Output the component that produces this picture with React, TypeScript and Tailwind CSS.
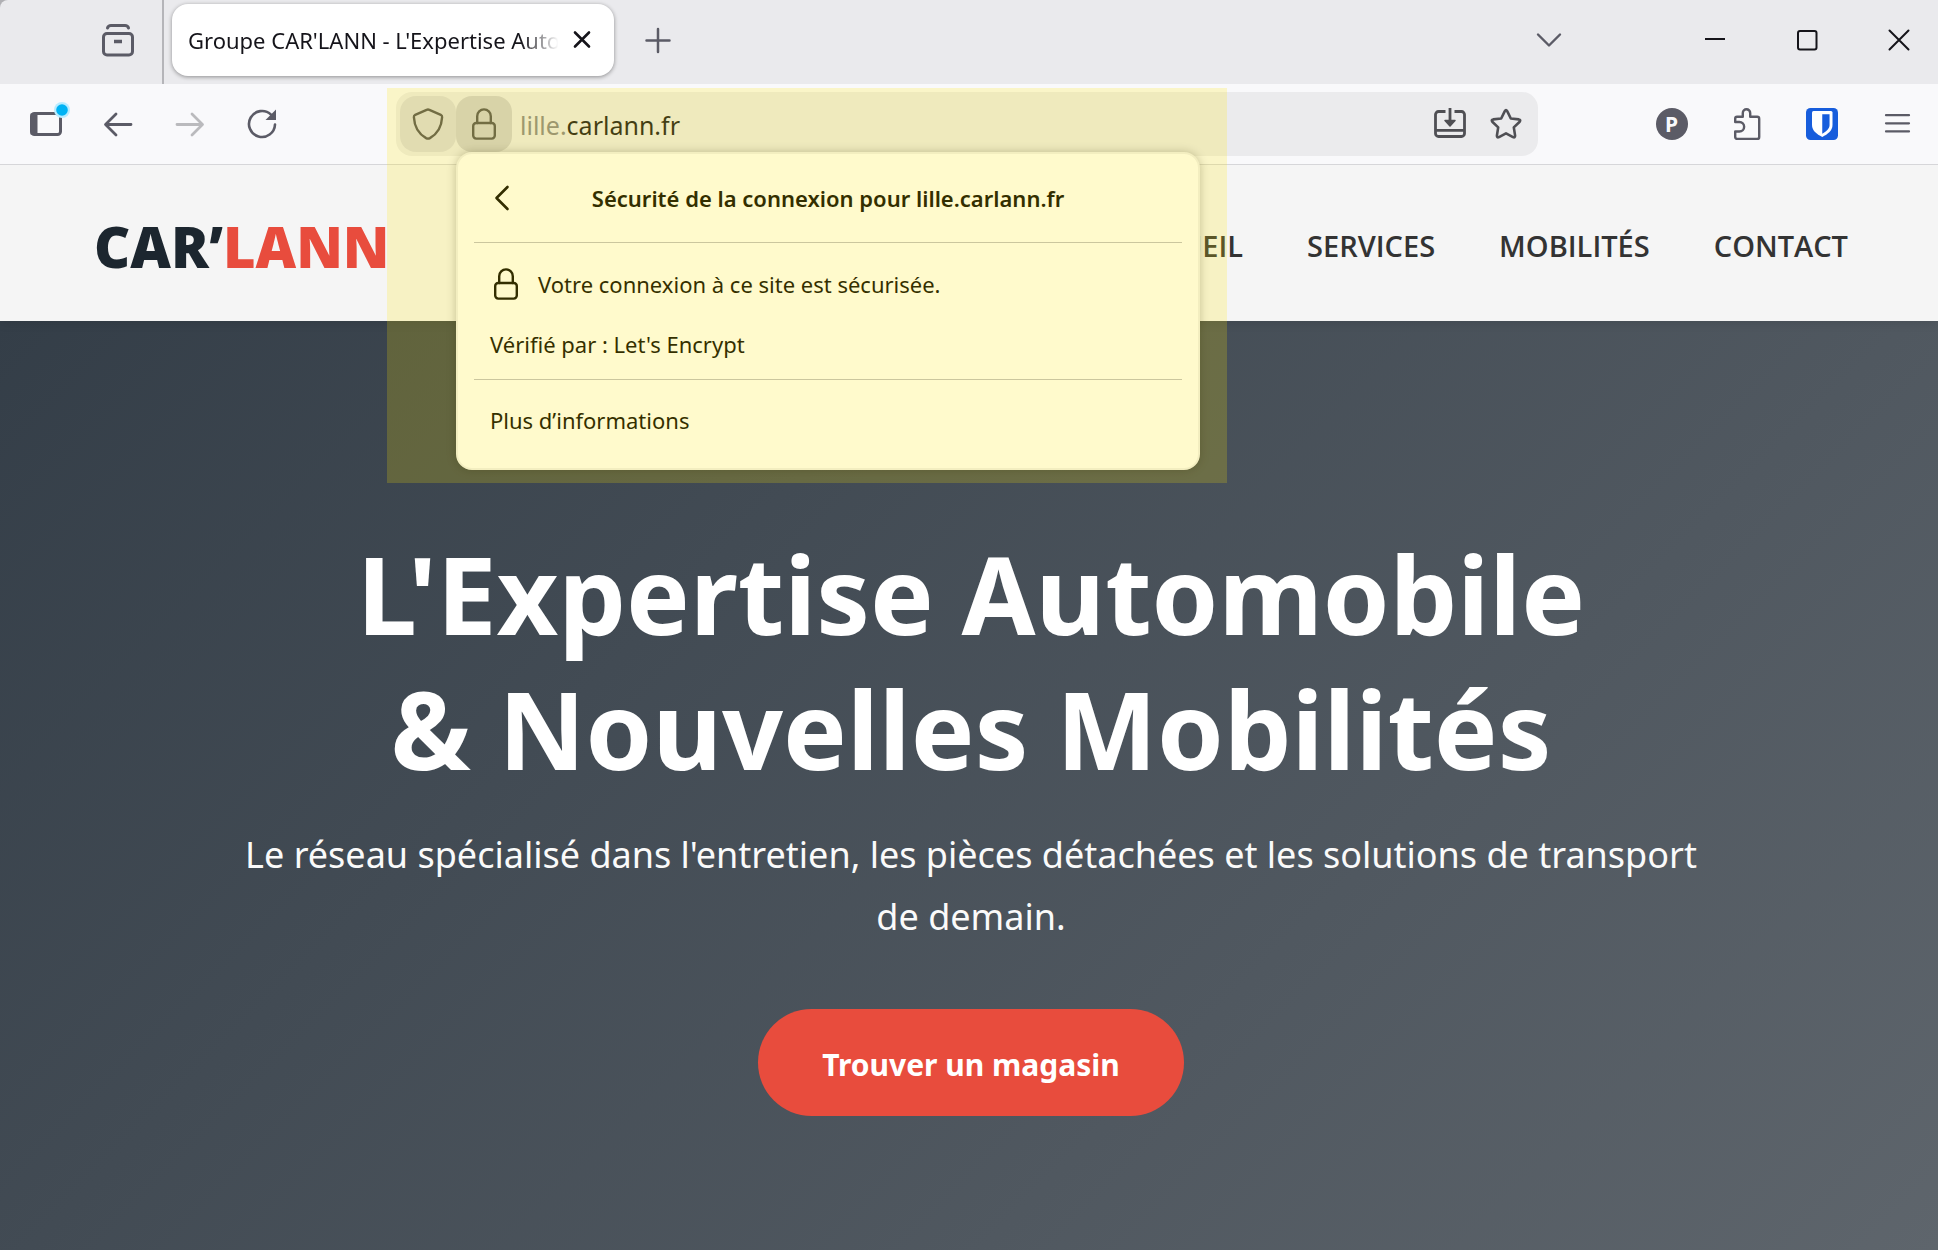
import type { ReactNode } from 'react';

type IconProps = { children: ReactNode; className?: string; width?: number };

function Icon({ children, className = '', width = 3 }: IconProps) {
  return (
    <svg
      viewBox="0 0 32 32"
      className={`size-8 shrink-0 overflow-visible ${className}`}
      fill="none"
      stroke="currentColor"
      strokeWidth={width}
      strokeLinecap="round"
      strokeLinejoin="round"
      aria-hidden="true"
    >
      {children}
    </svg>
  );
}

function LockIcon() {
  return (
    <Icon width={2.4}>
      <rect x="5.2" y="15" width="21.6" height="15.6" rx="3" />
      <path d="M9.2 15V8.200a6.800 6.800 0 0 1 13.600 0V15" />
    </Icon>
  );
}

function ToolButton({ label, className = '', children }: { label: string; className?: string; children: ReactNode }) {
  return (
    <button type="button" aria-label={label} className={`flex h-14 items-center justify-center ${className}`}>
      {children}
    </button>
  );
}

function TabStrip() {
  return (
    <div className="flex h-21 items-stretch rounded-tl-lg bg-[#eaeaed] text-[#5b5b66]">
      <div className="flex w-[164px] items-center justify-end border-r-2 border-[#b5b5b9] pr-[10px] pb-1">
        <ToolButton label="Liste des onglets" className="w-[68px]">
          <Icon>
            <rect x="1.500" y="9.500" width="29" height="21.500" rx="3.500" />
            <path d="M5.500 4c.5-1.700 1.500-2.500 3.500-2.500h14c2 0 3 .8 3.500 2.500" />
            <path d="M12 17.500h8" strokeLinecap="butt" strokeWidth="3.500" />
          </Icon>
        </ToolButton>
      </div>
      <div className="my-auto mb-2 ml-2 flex h-18 w-[442px] items-center rounded-2xl bg-white px-4 text-[#15141a] shadow-[0_1px_4px_rgba(0,0,0,0.4)]">
        <span className="flex-1 overflow-hidden text-[22px] whitespace-nowrap [mask-image:linear-gradient(to_right,black_88%,transparent_98%)]">
          Groupe CAR'LANN - L'Expertise Automobile
        </span>
        <button type="button" aria-label="Fermer l’onglet" className="flex w-8 items-center justify-center">
          <Icon width={2.6}>
            <path d="M9 8.500 23 22.500M23 8.500 9 22.500" />
          </Icon>
        </button>
      </div>
      <ToolButton label="Nouvel onglet" className="mt-3 ml-3 w-16">
        <Icon width={2.500}>
          <path d="M16 5v23M4.500 16.500h23" />
        </Icon>
      </ToolButton>
      <div className="ml-auto flex items-center gap-[14px] pb-1">
        <ToolButton label="Lister tous les onglets" className="mr-[77px] w-[72px]">
          <Icon width={2.400}>
            <path d="M5 10.500l11 11 11-11" />
          </Icon>
        </ToolButton>
        <ToolButton label="Réduire" className="w-[78px] text-[#15141a]">
          <Icon width={2}>
            <path d="M6 15h20" strokeLinecap="butt" />
          </Icon>
        </ToolButton>
        <ToolButton label="Agrandir" className="w-[78px] text-[#15141a]">
          <Icon width={2}>
            <rect x="7" y="7" width="18.500" height="18.500" rx="2" />
          </Icon>
        </ToolButton>
        <ToolButton label="Fermer" className="w-[78px] text-[#15141a]">
          <Icon width={2}>
            <path d="M6.500 6.500l19 19M25.500 6.500l-19 19" />
          </Icon>
        </ToolButton>
      </div>
    </div>
  );
}

function SecurityPopup() {
  return (
    <section
      aria-label="Sécurité de la connexion"
      className="absolute top-15 left-15 z-10 w-[744px] rounded-2xl border-2 border-[#f0f0f1] bg-white px-4 text-[22px] text-black shadow-[0_0_10px_rgba(0,0,0,0.25)]"
    >
      <header className="flex h-[89px] items-center border-b border-[#bfbfc6]">
        <button type="button" aria-label="Retour" className="flex w-16 justify-start pl-3">
          <Icon width={2.600}>
            <path d="M21.500 5 10.500 16l11 11" />
          </Icon>
        </button>
        <h2 className="flex-1 pr-16 text-center font-semibold">Sécurité de la connexion pour lille.carlann.fr</h2>
      </header>
      <div className="border-b border-[#bfbfc6] px-4 pt-[11px] pb-[5px]">
        <p className="flex h-15 items-center gap-4">
          <LockIcon />
          Votre connexion à ce site est sécurisée.
        </p>
        <p className="flex h-15 items-center">Vérifié par : Let's Encrypt</p>
      </div>
      <div className="pt-[10px] pb-[18px]">
        <button type="button" className="flex h-15 w-full items-center px-4">
          Plus d’informations
        </button>
      </div>
    </section>
  );
}

function AddressBar() {
  return (
    <div className="relative mr-24 ml-[98px] flex h-16 flex-1 items-center rounded-2xl bg-[#ebebed] p-1 text-[#4f4f54]">
      <ToolButton label="Protection contre le pistage" className="w-14 rounded-2xl bg-[#dadade]">
        <Icon width={2.400}>
          <path d="M14.600 1.800 3.200 6.800C2.200 7.300 1.800 8 1.900 9.200 2.400 18.500 6 25.500 14.100 30.100q1.900 1 3.800 0C26 25.500 29.600 18.500 30.100 9.200c.1-1.200-.3-1.900-1.300-2.400L17.400 1.800q-1.400-.6-2.800 0Z" />
        </Icon>
      </ToolButton>
      <ToolButton label="Informations sur le site" className="w-14 rounded-2xl bg-[#cfcfd3]">
        <LockIcon />
      </ToolButton>
      <label htmlFor="url" className="pt-1 pl-2 text-[25px] text-[#85858a]">
        lille.
      </label>
      <input
        id="url"
        defaultValue="carlann.fr"
        className="min-w-0 flex-1 bg-transparent pt-1 text-[25px] text-[#15141a] outline-none"
      />
      <ToolButton label="Installer l’application" className="w-14">
        <Icon width={2.800}>
          <path
            strokeLinecap="butt"
            d="M11.500 3.500h-7a3 3 0 0 0-3 3v19a3 3 0 0 0 3 3h23a3 3 0 0 0 3-3v-19a3 3 0 0 0-3-3h-7M1.500 22.300h29M16 0v14"
          />
          <path d="M11 12.500h10l-5 5.500Z" fill="currentColor" strokeWidth="1.500" />
        </Icon>
      </ToolButton>
      <ToolButton label="Marquer cette page" className="w-14">
        <Icon width={2.600}>
          <path d="M14.800 3.100q1.200-2 2.400 0l3.600 7.400 8 .9q2.300.5.9 2.300l-5.900 5.700 1.300 8.200q.1 2.400-2.100 1.500L16 25.400l-7 3.700q-2.200.9-2.100-1.500l1.300-8.200-5.900-5.700q-1.400-1.800.9-2.300l8-.9Z" />
        </Icon>
      </ToolButton>
      <SecurityPopup />
      <div className="pointer-events-none absolute -top-1 -left-[9px] z-20 h-[395px] w-[840px] bg-[#ffe600]/20" />
    </div>
  );
}

function Toolbar() {
  return (
    <div className="relative z-10 flex h-[81px] items-center border-b border-[#d6d6d9] bg-[#f9f9fb] pr-1 pl-[10px] text-[#5b5b66]">
      <ToolButton label="Barre latérale" className="w-18">
        <Icon>
          <rect x="1.500" y="5.500" width="29" height="21" rx="3" />
          <path d="M4 5.500v21" strokeWidth="7" strokeLinecap="butt" />
          <circle cx="32" cy="2" r="8" fill="#b8ecff" stroke="none" />
          <circle cx="32" cy="2" r="5.800" fill="#00b3f4" stroke="none" />
        </Icon>
      </ToolButton>
      <ToolButton label="Page précédente" className="w-18">
        <Icon width={2.800}>
          <path d="M29 16.500H4M14 6 3.500 16.500 14 27" />
        </Icon>
      </ToolButton>
      <ToolButton label="Page suivante" className="w-18 text-[#bababd]">
        <Icon width={2.800}>
          <path d="M3 16.500h25M18 6l10.500 10.500L18 27" />
        </Icon>
      </ToolButton>
      <ToolButton label="Actualiser" className="w-18">
        <Icon width={2.600}>
          <path d="M29 16.500A13 13 0 1 1 25 6.600" />
          <path d="M30 1.500V12H19.500Z" fill="currentColor" stroke="none" />
        </Icon>
      </ToolButton>
      <AddressBar />
      <ToolButton label="Profil" className="w-[75px]">
        <span className="flex size-8 items-center justify-center rounded-full bg-[#5b5b66] text-[21px] leading-8 font-bold text-[#f9f9fb]">
          P
        </span>
      </ToolButton>
      <ToolButton label="Extensions" className="w-[75px]">
        <Icon width={2.400}>
          <path d="M4.200 14v-3.500a1.800 1.800 0 0 1 1.800-1.800h5.800V5a3.700 3.700 0 0 1 7.400 0v3.700h7a2 2 0 0 1 2 2v18.200a2 2 0 0 1-2 2H6.200a2 2 0 0 1-2-2v-5.400h4.200a4.750 4.750 0 0 0 0-9.500Z" />
        </Icon>
      </ToolButton>
      <ToolButton label="Bitwarden" className="w-[75px]">
        <Icon>
          <rect width="32" height="32" rx="4.500" fill="#175ddc" stroke="none" />
          <path d="M7.500 3h17.500q1.500 0 1.500 1.500V17c0 5.500-4.500 9-10.250 12C10.500 26 6 22.500 6 17V4.500Q6 3 7.500 3Z" fill="#fff" stroke="none" />
          <path d="M16.250 6.200h7.300V17c0 3.500-2.800 6-7.300 8.700Z" fill="#175ddc" stroke="none" />
        </Icon>
      </ToolButton>
      <ToolButton label="Menu" className="w-[75px]">
        <Icon width={2.200}>
          <path d="M5 7.200h23M5 15.300h23M5 23.400h23" />
        </Icon>
      </ToolButton>
    </div>
  );
}

const links = ['ACCUEIL', 'SERVICES', 'MOBILITÉS', 'CONTACT'];

function SiteHeader() {
  return (
    <header className="relative flex h-39 items-center justify-between bg-[#f5f5f5] pt-[6px] pr-[90px] pl-[94px] font-['Open_Sans',sans-serif] shadow-[0_2px_10px_rgba(0,0,0,0.1)]">
      <a href="#accueil" className="text-[56px] font-extrabold text-[#1c262f]">
        CAR’<span className="text-[#e84c3d]">LANN</span>
      </a>
      <nav className="flex gap-16 text-[29px] font-semibold text-[#333333]">
        {links.map((link) => (
          <a key={link} href={`#${link.toLowerCase()}`}>
            {link}
          </a>
        ))}
      </nav>
    </header>
  );
}

function Hero() {
  return (
    <section className="flex flex-1 flex-col items-center bg-linear-[135deg,#343e48,#5e656c] pt-[205px] pb-[134px] pl-1 text-center text-white">
      <h1 className="text-[107px] leading-[135px] font-bold">
        L'Expertise Automobile
        <br />
        &amp; Nouvelles Mobilités
      </h1>
      <p className="mt-7 max-w-[1480px] text-[36px] leading-[62px] text-[#fafafa]">
        Le réseau spécialisé dans l'entretien, les pièces détachées et les solutions de transport de demain.
      </p>
      <a
        href="#magasins"
        className="mt-[61px] flex h-[107px] items-center rounded-full bg-[#e84c3d] px-16 pt-1 text-[30px] font-bold"
      >
        Trouver un magasin
      </a>
    </section>
  );
}

export default function App() {
  return (
    <div className="flex min-h-screen flex-col bg-[#b0b0b4] font-['Noto_Sans','Open_Sans',sans-serif]">
      <TabStrip />
      <Toolbar />
      <SiteHeader />
      <Hero />
    </div>
  );
}
